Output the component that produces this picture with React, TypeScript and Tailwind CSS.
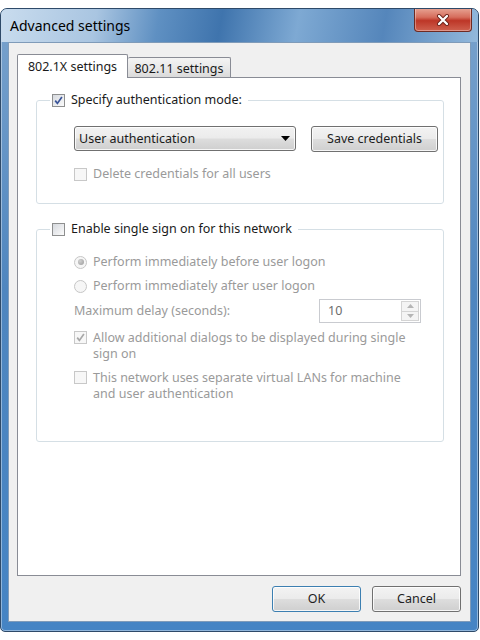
import clsx from 'clsx';
import type { ReactNode } from 'react';

function CheckBox({ checked, disabled }: { checked?: boolean; disabled?: boolean }) {
  return (
    <span
      className={clsx(
        'flex h-[13px] w-[13px] shrink-0 items-center justify-center border',
        disabled ? 'border-[#c8c8c8] bg-[#f7f7f7]' : 'border-[#8e8f8f] bg-[linear-gradient(135deg,#d6d9de,#fbfbfb)]'
      )}
    >
      {checked && (
        <svg width="9" height="9" viewBox="0 0 9 9">
          <path
            d="M1.2 4.6 L3.4 7.4 L7.9 1"
            fill="none"
            stroke={disabled ? '#a8a8a8' : '#3a5499'}
            strokeWidth="1.7"
          />
        </svg>
      )}
    </span>
  );
}

function Radio({ checked }: { checked?: boolean }) {
  return (
    <span className="flex h-[13px] w-[13px] shrink-0 items-center justify-center rounded-full border border-[#c6c6c6] bg-[#f6f6f6]">
      {checked && <span className="h-[6px] w-[6px] rounded-full bg-[radial-gradient(circle_at_35%_35%,#d0d0d0,#9a9a9a)]" />}
    </span>
  );
}

function Button({ children, primary, className }: { children: ReactNode; primary?: boolean; className?: string }) {
  return (
    <div
      className={clsx(
        'flex h-[26px] items-center justify-center rounded-[3px] border text-[#1e1e1e] shadow-[inset_0_0_0_1px_rgba(255,255,255,0.8)]',
        'bg-[linear-gradient(180deg,#f3f3f3_0%,#ebebeb_48%,#dddddd_52%,#cfcfcf_100%)]',
        primary ? 'border-[#3c7fb1] shadow-[inset_0_0_0_1px_#b7e4f8]' : 'border-[#707070]',
        className
      )}
    >
      {children}
    </div>
  );
}

export default function App() {
  return (
    <div className="h-[640px] w-[480px] bg-white pt-[8px] font-['Noto_Sans',sans-serif] text-[12.5px] leading-[16px] text-[#1a1a1a]">
      <div className="flex h-[624px] w-[479px] flex-col overflow-hidden rounded-t-[7px] rounded-b-[5px] border border-[#2e4a69] bg-[linear-gradient(180deg,#7aa3cd_0%,#4f86bf_45%,#4584c4_100%)] shadow-[inset_0_0_0_1px_rgba(255,255,255,0.4)]">
        {/* title bar */}
        <div className="flex h-[33px] items-start justify-between bg-[linear-gradient(100deg,#c9dcee_0%,#a9c5e1_20%,#5f90c2_33%,#3f74ad_46%,#7ea9d3_62%,#5586bb_80%,#93b9dc_100%)]">
          <span className="pl-[9px] pt-[8px] text-[14px] leading-[18px] text-black">Advanced settings</span>
          <div className="-mt-px mr-[6px] flex h-[24px] w-[58px] items-center justify-center rounded-b-[4px] border border-t-0 border-[#6e2a22] bg-[linear-gradient(180deg,#e8a696_0%,#d66d5c_40%,#bd3627_55%,#cf614f_100%)] shadow-[inset_0_0_0_1px_rgba(255,255,255,0.35)]">
            <svg width="14" height="12" viewBox="0 0 14 12">
              <path d="M3 2 L11 10 M11 2 L3 10" stroke="#6b2018" strokeWidth="4" strokeLinecap="round" />
              <path d="M3 2 L11 10 M11 2 L3 10" stroke="#ffffff" strokeWidth="2.3" strokeLinecap="round" />
            </svg>
          </div>
        </div>

        {/* client area */}
        <div className="mx-[7px] flex h-[580px] flex-col border border-[#7f9bb9] bg-[#f0f0f0] px-[8px] pt-[11px]">
          <div className="flex items-end">
            <div className="relative z-10 -mb-px flex h-[24px] w-[111px] items-center justify-center rounded-t-[2px] border border-b-0 border-[#898c95] bg-white">
              802.1X settings
            </div>
            <div className="flex h-[20px] w-[103px] items-center justify-center rounded-t-[2px] border border-b-0 border-l-0 border-[#898c95] bg-[linear-gradient(180deg,#f4f4f4_0%,#e9e9e9_50%,#dadada_100%)] pt-[2px]">
              802.11 settings
            </div>
          </div>

          <div className="h-[499px] w-[444px] border border-[#898c95] bg-white">
            {/* authentication group */}
            <fieldset className="ml-[18px] mt-[14px] w-[408px] rounded-[3px] border border-[#d5dfe5] px-0 pb-[21px]">
              <legend className="ml-[13px] px-[2px]">
                <span className="flex h-[16px] items-center gap-[6px] pr-[4px]">
                  <CheckBox checked />
                  Specify authentication mode:
                </span>
              </legend>
              <div className="ml-[37px] mt-[18px] flex gap-[15px]">
                <div className="flex h-[25px] w-[222px] items-center justify-between rounded-[3px] border border-[#707070] bg-[linear-gradient(180deg,#f2f2f2_0%,#ebebeb_48%,#dddddd_52%,#cfcfcf_100%)] pl-[4px] pr-[5px] shadow-[inset_0_0_0_1px_rgba(255,255,255,0.8)]">
                  <span>User authentication</span>
                  <svg width="9" height="5" viewBox="0 0 9 5">
                    <path d="M0 0 H9 L4.5 5 Z" fill="#000" />
                  </svg>
                </div>
                <Button className="h-[25px] w-[127px]">Save credentials</Button>
              </div>
              <div className="ml-[37px] mt-[14px] flex h-[16px] items-center gap-[6px] text-[#9a9a9a]">
                <CheckBox disabled />
                Delete credentials for all users
              </div>
            </fieldset>

            {/* single sign on group */}
            <fieldset className="ml-[18px] mt-[17px] w-[408px] rounded-[3px] border border-[#d5dfe5] px-0 pb-[39px]">
              <legend className="ml-[13px] px-[2px]">
                <span className="flex h-[16px] items-center gap-[6px] pr-[4px]">
                  <CheckBox />
                  Enable single sign on for this network
                </span>
              </legend>
              <div className="ml-[37px] mr-[22px] flex flex-col text-[#9a9a9a]">
                <div className="mt-[17px] flex h-[16px] items-center gap-[6px]">
                  <Radio checked />
                  Perform immediately before user logon
                </div>
                <div className="mt-[8px] flex h-[16px] items-center gap-[6px]">
                  <Radio />
                  Perform immediately after user logon
                </div>
                <div className="mt-[5px] flex h-[24px] items-center justify-between">
                  <span>Maximum delay (seconds):</span>
                  <div className="flex h-[24px] w-[102px] border border-[#c9cbd0] bg-white">
                    <span className="flex flex-1 items-center pl-[8px] text-[#6d6d6d]">10</span>
                    <div className="my-[1px] mr-[1px] flex w-[18px] flex-col border border-[#d4d4d4] bg-[#f4f4f4]">
                      <div className="flex flex-1 items-center justify-center border-b border-[#d4d4d4]">
                        <svg width="7" height="4" viewBox="0 0 7 4">
                          <path d="M0 4 H7 L3.5 0 Z" fill="#b5b5b5" />
                        </svg>
                      </div>
                      <div className="flex flex-1 items-center justify-center">
                        <svg width="7" height="4" viewBox="0 0 7 4">
                          <path d="M0 0 H7 L3.5 4 Z" fill="#b5b5b5" />
                        </svg>
                      </div>
                    </div>
                  </div>
                </div>
                <div className="mt-[7px] flex items-start gap-[6px]">
                  <span className="mt-[1px]">
                    <CheckBox checked disabled />
                  </span>
                  <span>
                    Allow additional dialogs to be displayed during single
                    <br />
                    sign on
                  </span>
                </div>
                <div className="mt-[8px] flex items-start gap-[6px]">
                  <span className="mt-[1px]">
                    <CheckBox disabled />
                  </span>
                  <span>
                    This network uses separate virtual LANs for machine
                    <br />
                    and user authentication
                  </span>
                </div>
              </div>
            </fieldset>
          </div>

          <div className="mt-[10px] flex justify-end gap-[11px] pr-[1px]">
            <Button primary className="w-[89px]">OK</Button>
            <Button className="w-[89px]">Cancel</Button>
          </div>
        </div>
      </div>
    </div>
  );
}
